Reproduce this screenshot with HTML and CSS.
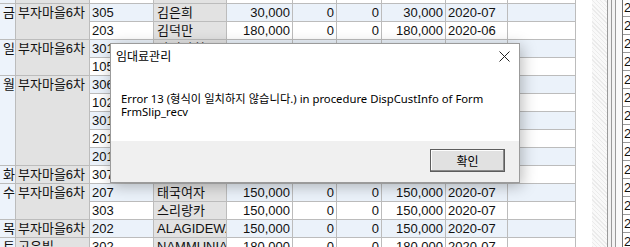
FILE: index.html
```html
<!DOCTYPE html>
<html>
<head>
	<meta charset="utf-8" />
	<title>임대료관리</title>
	<link rel="stylesheet" href="styles.css">
</head>
<body>
<div class="screen">
	<div class="grid-wrap">
	<table class="grid">
		<colgroup>
			<col class="c-day"><col class="c-site"><col class="c-room"><col class="c-name"><col class="c-amt">
			<col class="c-zero"><col class="c-zero2"><col class="c-amt2"><col class="c-month"><col class="c-rest">
		</colgroup>
		<tr class="even">
			<td class="day"></td><td class="site"></td><td></td><td class="name"></td><td class="num"></td>
			<td class="num"></td><td class="num"></td><td class="num"></td><td></td><td></td>
		</tr>
		<tr class="odd">
			<td class="day" rowspan="2">금</td><td class="site" rowspan="2">부자마을6차</td>
			<td>305</td><td class="name">김은희</td><td class="num">30,000</td>
			<td class="num">0</td><td class="num">0</td><td class="num">30,000</td><td>2020-07</td><td></td>
		</tr>
		<tr class="even">
			<td>203</td><td class="name">김덕만</td><td class="num">180,000</td>
			<td class="num">0</td><td class="num">0</td><td class="num">180,000</td><td>2020-06</td><td></td>
		</tr>
		<tr class="odd">
			<td class="day" rowspan="2">일</td><td class="site" rowspan="2">부자마을6차</td>
			<td>301</td><td class="name">나미라히</td><td class="num">180,000</td>
			<td class="num">0</td><td class="num">0</td><td class="num">180,000</td><td>2020-06</td><td></td>
		</tr>
		<tr class="even">
			<td>105</td><td class="name"></td><td class="num"></td>
			<td class="num"></td><td class="num"></td><td class="num"></td><td></td><td></td>
		</tr>
		<tr class="odd">
			<td class="day" rowspan="5">월</td><td class="site" rowspan="5">부자마을6차</td>
			<td>306</td><td class="name"></td><td class="num"></td>
			<td class="num"></td><td class="num"></td><td class="num"></td><td></td><td></td>
		</tr>
		<tr class="even">
			<td>102</td><td class="name"></td><td class="num"></td>
			<td class="num"></td><td class="num"></td><td class="num"></td><td></td><td></td>
		</tr>
		<tr class="odd">
			<td>301</td><td class="name"></td><td class="num"></td>
			<td class="num"></td><td class="num"></td><td class="num"></td><td></td><td></td>
		</tr>
		<tr class="even">
			<td>201</td><td class="name"></td><td class="num"></td>
			<td class="num"></td><td class="num"></td><td class="num"></td><td></td><td></td>
		</tr>
		<tr class="odd">
			<td>201</td><td class="name"></td><td class="num"></td>
			<td class="num"></td><td class="num"></td><td class="num"></td><td></td><td></td>
		</tr>
		<tr class="even">
			<td class="day">화</td><td class="site">부자마을6차</td>
			<td>307</td><td class="name"></td><td class="num"></td>
			<td class="num"></td><td class="num"></td><td class="num"></td><td></td><td></td>
		</tr>
		<tr class="odd">
			<td class="day" rowspan="2">수</td><td class="site" rowspan="2">부자마을6차</td>
			<td>207</td><td class="name">태국여자</td><td class="num">150,000</td>
			<td class="num">0</td><td class="num">0</td><td class="num">150,000</td><td>2020-07</td><td></td>
		</tr>
		<tr class="even">
			<td>303</td><td class="name">스리랑카</td><td class="num">150,000</td>
			<td class="num">0</td><td class="num">0</td><td class="num">150,000</td><td>2020-07</td><td></td>
		</tr>
		<tr class="odd">
			<td class="day">목</td><td class="site">부자마을6차</td>
			<td>202</td><td class="name">ALAGIDEWA</td><td class="num">150,000</td>
			<td class="num">0</td><td class="num">0</td><td class="num">150,000</td><td>2020-07</td><td></td>
		</tr>
		<tr class="even">
			<td class="day">토</td><td class="site">고운빌</td>
			<td>302</td><td class="name">NAMMUNIAL</td><td class="num">180,000</td>
			<td class="num">0</td><td class="num">0</td><td class="num">180,000</td><td>2020-07</td><td></td>
		</tr>
	</table>
	</div>
	<div class="edge">
		<div class="blank"></div>
		<div class="hatch"></div>
		<div class="rails"><span></span><span></span><span></span></div>
		<div class="side">
			<div>2020</div><div>2020</div><div>2020</div><div>2020</div><div>2020</div><div>2020</div><div>2020</div>
			<div>2020</div><div>2020</div><div>2020</div><div>2020</div><div>2020</div><div>2020</div><div>2020</div>
		</div>
	</div>

	<div class="dialog">
		<div class="dlg-title">
			<span>임대료관리</span>
			<svg class="dlg-close" width="11" height="11" viewBox="0 0 11 11">
				<path d="M0.5 0.5 L10.5 10.5 M10.5 0.5 L0.5 10.5" stroke="#222" stroke-width="1" fill="none"/>
			</svg>
		</div>
		<div class="dlg-body">
			<p>Error 13 (형식이 일치하지 않습니다.) in procedure DispCustInfo of Form<br>FrmSlip_recv</p>
		</div>
		<div class="dlg-foot">
			<button class="btn-ok">확인</button>
		</div>
	</div>
</div>
</body>
</html>
```

FILE: styles.css
```css
* {
	margin: 0;
	padding: 0;
}
html, body {
	width: 630px;
	height: 247px;
	overflow: hidden;
	background: #fff;
}
.screen {
	position: relative;
	display: flex;
	width: 630px;
	height: 247px;
	overflow: hidden;
	font-family: "Liberation Sans", "Noto Sans CJK KR", sans-serif;
	font-size: 13px;
	color: #111;
}
.grid-wrap {
	flex: 0 0 575px;
	width: 575px;
	overflow: hidden;
}
.grid {
	width: 576px;
	margin-top: -15px;
	margin-left: -1px;
	border-collapse: collapse;
	table-layout: fixed;
}
.c-day { width: 16px; }
.c-site { width: 74px; }
.c-room { width: 64px; }
.c-name { width: 73px; }
.c-amt { width: 66px; }
.c-zero { width: 44px; }
.c-zero2 { width: 45px; }
.c-amt2 { width: 64px; }
.c-month { width: 62px; }
.c-rest { width: 68px; }
.grid tr {
	height: 18px;
}
.grid td {
	height: 17px;
	border: 1px solid #bcbcbc;
	padding: 0 2px;
	line-height: 17px;
	white-space: nowrap;
	overflow: hidden;
	vertical-align: top;
}
.grid .odd td {
	background: #ebf2fa;
}
.grid .even td {
	background: #fff;
}
.grid td.day {
	background: #edf3fb;
	padding: 0;
	text-align: right;
}
.grid td.site {
	background: #e2e2e2;
	padding-left: 2px;
}
.grid td.name {
	background: #e2e2e2;
	padding-left: 3px;
}
.grid td.num {
	text-align: right;
}
.edge {
	flex: 0 0 55px;
	display: flex;
	width: 55px;
	height: 247px;
	border-left: 1px solid #bcbcbc;
	box-sizing: border-box;
}
.blank {
	flex: 0 0 16px;
	background: #fff;
}
.hatch {
	flex: 0 0 15px;
	background: #f5f5f5;
	background-image: repeating-linear-gradient(45deg, #ebebeb 0 1px, #f9f9f9 1px 3px);
}
.rails {
	flex: 0 0 16px;
	display: flex;
}
.rails span {
	flex: 0 0 3px;
	border-left: 1px solid #9a9a9a;
	background: #f3f3f3;
}
.rails span:last-child {
	flex: 1;
	background: #fafafa;
	border-right: 1px solid #6f6f6f;
}
.side {
	flex: 0 0 7px;
	overflow: hidden;
	margin-top: -1px;
}
.side div {
	height: 17px;
	border-bottom: 1px solid #9a9a9a;
	padding-left: 1px;
	line-height: 17px;
	font-size: 13px;
	white-space: nowrap;
}

.dialog {
	position: absolute;
	left: 110px;
	top: 43px;
	width: 408px;
	height: 138px;
	background: #fff;
	border: 1px solid #9b9b9b;
	box-shadow: 2px 3px 14px rgba(0, 0, 0, 0.28);
	display: flex;
	flex-direction: column;
	font-family: "Noto Sans", "Noto Sans CJK KR", sans-serif;
	font-size: 12px;
	color: #000;
}
.dlg-title {
	height: 29px;
	display: flex;
	align-items: center;
	justify-content: space-between;
	padding: 0 9px 5px 5px;
	box-sizing: border-box;
}
.dlg-body {
	height: 68px;
	padding: 20px 0 0 10px;
	box-sizing: border-box;
}
.dlg-body p {
	font-size: 11.3px;
	line-height: 12.5px;
}
.dlg-foot {
	flex: 1;
	background: #f0f0f0;
	display: flex;
	justify-content: flex-end;
	align-items: flex-start;
	padding: 8px 14px 0 0;
}
.btn-ok {
	width: 75px;
	height: 23px;
	background: #e1e1e1;
	border: 1px solid #5d5d5d;
	box-shadow: inset -1px -1px 0 #8a8a8a, inset 1px 1px 0 #fdfdfd;
	font-family: "Noto Sans CJK KR", sans-serif;
	font-size: 12px;
	color: #000;
}
```
